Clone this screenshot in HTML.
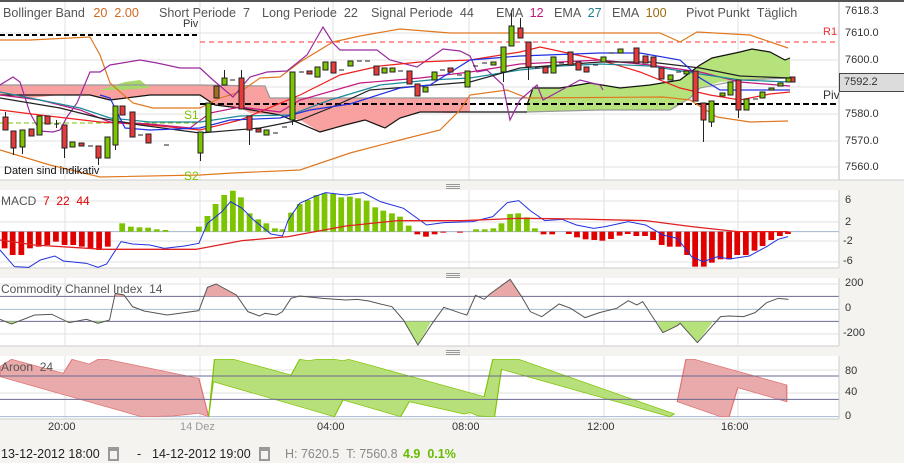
<!DOCTYPE html>
<html><head><meta charset="utf-8"><style>
html,body{margin:0;padding:0;background:#f4f3f0;width:904px;height:463px;overflow:hidden;font-family:"Liberation Sans",sans-serif}
.t{position:absolute;white-space:nowrap;font-size:12.6px;color:#555;line-height:1}
.a{position:absolute;font-size:11px;color:#333;line-height:1;white-space:nowrap}
</style></head><body>
<svg width="904" height="463" style="position:absolute;left:0;top:0" xmlns="http://www.w3.org/2000/svg">
<rect x="0" y="2" width="839" height="178" fill="#fff"/>
<rect x="839" y="2" width="65" height="178" fill="#fff"/>
<rect x="0" y="0" width="904" height="2" fill="#555"/>
<line x1="839" y1="2" x2="839" y2="180" stroke="#bbb"/>
<line x1="0" y1="180" x2="904" y2="180" stroke="#ccc"/>
<rect x="0" y="190" width="839" height="78" fill="#fff"/>
<rect x="0" y="278" width="839" height="68" fill="#fff"/>
<rect x="0" y="356" width="839" height="63" fill="#fff"/>
<g stroke="#ccc"><line x1="839" y1="190" x2="839" y2="268"/><line x1="839" y1="278" x2="839" y2="346"/><line x1="839" y1="356" x2="839" y2="419"/>
<line x1="0" y1="268" x2="839" y2="268"/><line x1="0" y1="346" x2="839" y2="346"/><line x1="0" y1="419" x2="839" y2="419"/></g>
<g stroke="#999" stroke-width="1"><line x1="446" y1="184.5" x2="460" y2="184.5"/><line x1="446" y1="186.5" x2="460" y2="186.5"/><line x1="446" y1="188.5" x2="460" y2="188.5"/>
<line x1="446" y1="273.5" x2="460" y2="273.5"/><line x1="446" y1="275.5" x2="460" y2="275.5"/><line x1="446" y1="277.5" x2="460" y2="277.5"/>
<line x1="446" y1="350.5" x2="460" y2="350.5"/><line x1="446" y1="352.5" x2="460" y2="352.5"/><line x1="446" y1="354.5" x2="460" y2="354.5"/></g>
<g stroke="#e2e2e2">
<line x1="65" y1="2" x2="65" y2="180"/><line x1="200" y1="2" x2="200" y2="180"/><line x1="333" y1="2" x2="333" y2="180"/><line x1="469" y1="2" x2="469" y2="180"/><line x1="604" y1="2" x2="604" y2="180"/><line x1="738" y1="2" x2="738" y2="180"/>
<line x1="0" y1="33" x2="839" y2="33"/><line x1="0" y1="60" x2="839" y2="60"/><line x1="0" y1="87" x2="839" y2="87"/><line x1="0" y1="114" x2="839" y2="114"/><line x1="0" y1="141" x2="839" y2="141"/><line x1="0" y1="167" x2="839" y2="167"/>
<line x1="65" y1="190" x2="65" y2="268"/><line x1="200" y1="190" x2="200" y2="268"/><line x1="333" y1="190" x2="333" y2="268"/><line x1="469" y1="190" x2="469" y2="268"/><line x1="604" y1="190" x2="604" y2="268"/><line x1="738" y1="190" x2="738" y2="268"/>
<line x1="0" y1="201" x2="839" y2="201"/><line x1="0" y1="222" x2="839" y2="222"/><line x1="0" y1="241" x2="839" y2="241"/><line x1="0" y1="262" x2="839" y2="262"/>
<line x1="65" y1="278" x2="65" y2="346"/><line x1="200" y1="278" x2="200" y2="346"/><line x1="333" y1="278" x2="333" y2="346"/><line x1="469" y1="278" x2="469" y2="346"/><line x1="604" y1="278" x2="604" y2="346"/><line x1="738" y1="278" x2="738" y2="346"/>
<line x1="0" y1="284" x2="839" y2="284"/><line x1="0" y1="334" x2="839" y2="334"/>
<line x1="65" y1="356" x2="65" y2="419"/><line x1="200" y1="356" x2="200" y2="419"/><line x1="333" y1="356" x2="333" y2="419"/><line x1="469" y1="356" x2="469" y2="419"/><line x1="604" y1="356" x2="604" y2="419"/><line x1="738" y1="356" x2="738" y2="419"/>
<line x1="0" y1="370" x2="839" y2="370"/><line x1="0" y1="393" x2="839" y2="393"/>
</g>

<polygon points="0,85 200,85 215,85 265,86 270,98 470,98 470,112 450,113 420,112 400,118 385,128 365,120 345,125 320,132 300,120 280,115 250,113 240,108 215,105 200,95 150,95 110,100 90,95 60,95 30,98 0,95" fill="#f9a0a0"/>
<polygon points="100,90 125,82 140,80 150,88 120,90" fill="#a6d86a"/>
<polygon points="527,105 533,88 560,88 590,83 620,88 650,85 680,80 700,65 712,58 740,52 752,49 770,52 785,60 790,58 790,78 760,80 740,80 720,82 700,88 690,98 670,110 600,110 540,112 527,112" fill="#b5e27a"/>
<g fill="none" stroke-width="1.2">
<polyline points="527,105 533,88 560,88 590,83 620,88 650,85 680,80 700,65 712,58 740,52 752,49 770,52 785,60 790,58" stroke="#111"/>
<polyline points="0,95 60,95 90,95 110,100 150,95 200,95 215,105 240,108 280,115 320,132 345,125 365,120 385,128 400,118 420,112 470,112 527,112" stroke="#111"/>
<polyline points="0,85 200,85 265,86 270,98 470,98 527,98" stroke="#999"/>
<polyline points="527,112 600,110 670,110 690,98 700,88 740,80 790,78" stroke="#999"/>
</g>
<line x1="0" y1="35" x2="200" y2="35" stroke="#000" stroke-width="2" stroke-dasharray="5,3"/>
<line x1="200" y1="42" x2="839" y2="42" stroke="#f33" stroke-width="1" stroke-dasharray="5,4"/>
<line x1="200" y1="104" x2="839" y2="104" stroke="#000" stroke-width="2" stroke-dasharray="6,3"/>
<line x1="0" y1="123" x2="200" y2="123" stroke="#7cc300" stroke-width="1" stroke-dasharray="5,3"/>
<g fill="none" stroke-width="1.2">
<polyline points="0,40 30,40 70,38 90,37 100,55 110,83 133,103 153,108 200,108 220,98 240,92 260,78 280,77 300,62 333,42 360,36 400,29 450,33 507,33 600,33 660,33 680,42 697,32 750,35 788,48" stroke="#e07820"/>
<polyline points="0,150 50,165 100,177 200,175 233,173 300,170 350,153 400,140 440,130 460,110 470,95 507,90 527,98 663,97 690,100 717,117 750,122 788,121" stroke="#e07820"/>
<polyline points="0,85 13,77 20,82 30,113 40,131 53,132 60,130 67,117 77,103 90,72 100,72 110,65 140,60 157,63 180,68 200,68 213,80 233,97 250,77 267,72 287,71 307,55 323,27 333,43 340,50 377,50 390,60 417,67 443,49 460,51 470,56 477,72 487,70 503,85 510,120 520,100 537,85 543,100 567,87 580,80 600,85 603,90" stroke="#9a2aa0"/>
<polyline points="0,110 40,115 100,122 150,125 200,130 240,120 300,95 340,75 380,66 420,62 470,60 520,52 540,47 600,60 640,72 680,88 710,95 740,100 770,94 790,92" stroke="#ee2020"/>
<polyline points="0,95 40,100 80,110 110,122 150,124 190,128 210,113 240,107 280,112 300,100 360,83 420,78 470,72 520,64 600,60 650,65 700,72 740,82 790,86" stroke="#c01880"/>
<polyline points="0,92 40,100 80,108 110,118 150,122 200,122 240,116 290,115 330,100 380,85 430,80 470,78 520,70 560,66 600,64 650,66 700,74 740,80 790,82" stroke="#1a8a9a"/>
<polyline points="0,98 60,108 100,118 140,125 200,133 260,128 300,120 330,108 370,90 420,86 470,82 520,68 600,62 650,62 700,68 740,76 790,78" stroke="#222"/>
<polyline points="100,95 110,98 125,128 150,130 200,128 230,120 280,118 310,110 350,104 400,88 430,85 470,60 520,56 600,53 640,53 680,60 700,78 720,90 790,90" stroke="#2030e0"/>
</g>
<g stroke="#222" stroke-width="1">
<g fill="#e83a3a">
<rect x="3" y="117" width="5" height="13"/><rect x="11" y="131" width="5" height="17"/><rect x="29" y="129" width="5" height="7"/><rect x="45" y="116" width="5" height="8"/><rect x="62" y="125" width="5" height="23"/><rect x="79" y="143" width="5" height="3"/><rect x="96" y="146" width="5" height="12"/><rect x="120" y="106" width="5" height="9"/><rect x="130" y="112" width="5" height="25"/><rect x="146" y="134" width="5" height="9"/><rect x="239" y="78" width="5" height="31"/><rect x="247" y="116" width="5" height="14"/><rect x="256" y="129" width="5" height="3"/><rect x="307" y="71" width="5" height="3"/><rect x="331" y="62" width="5" height="11"/><rect x="374" y="66" width="5" height="9"/><rect x="407" y="71" width="5" height="13"/><rect x="415" y="84" width="5" height="12"/><rect x="448" y="68" width="5" height="4"/><rect x="518" y="28" width="5" height="10"/><rect x="526" y="42" width="5" height="25"/><rect x="543" y="67" width="5" height="6"/><rect x="568" y="52" width="5" height="13"/><rect x="576" y="62" width="5" height="8"/><rect x="584" y="67" width="5" height="5"/><rect x="634" y="48" width="5" height="15"/><rect x="643" y="56" width="5" height="7"/><rect x="651" y="57" width="5" height="10"/><rect x="659" y="68" width="5" height="11"/><rect x="693" y="71" width="5" height="30"/><rect x="701" y="103" width="5" height="17"/><rect x="736" y="80" width="5" height="30"/><rect x="790" y="77" width="5" height="5"/>
</g>
<g fill="#7cc300">
<rect x="20" y="130" width="5" height="17"/><rect x="37" y="116" width="5" height="19"/><rect x="70" y="142" width="5" height="5"/><rect x="105" y="137" width="5" height="21"/><rect x="113" y="106" width="5" height="39"/><rect x="198" y="132" width="5" height="21"/><rect x="206" y="103" width="5" height="29"/><rect x="214" y="86" width="5" height="12" fill="#a07020"/><rect x="222" y="78" width="5" height="7"/><rect x="264" y="130" width="5" height="5"/><rect x="290" y="72" width="5" height="48"/><rect x="315" y="67" width="5" height="10"/><rect x="323" y="62" width="5" height="8"/><rect x="348" y="61" width="5" height="5"/><rect x="382" y="68" width="5" height="5"/><rect x="390" y="68" width="5" height="4"/><rect x="423" y="87" width="5" height="5"/><rect x="432" y="72" width="5" height="8"/><rect x="465" y="71" width="5" height="16"/><rect x="491" y="62" width="5" height="3"/><rect x="501" y="47" width="5" height="25"/><rect x="509" y="26" width="5" height="20"/><rect x="551" y="57" width="5" height="16"/><rect x="601" y="57" width="5" height="5"/><rect x="618" y="49" width="5" height="4"/><rect x="668" y="75" width="5" height="5"/><rect x="684" y="71" width="5" height="3"/><rect x="709" y="101" width="5" height="21"/><rect x="720" y="93" width="5" height="3"/><rect x="728" y="82" width="5" height="13"/><rect x="744" y="99" width="5" height="11"/><rect x="760" y="92" width="5" height="6"/><rect x="769" y="88" width="5" height="2"/><rect x="778" y="83" width="5" height="3"/><rect x="786" y="78" width="5" height="4"/>
</g>
<path d="M5.5 112V117M13.5 148V155M22.5 147V154M64.5 148V158M98.5 158V165M115.5 145V150M200.5 153V161M224.5 70V78M241.5 70V78M249.5 130V145M292.5 120V125M503.5 72V82M511.5 10V26M520.5 18V28M528.5 67V80M703.5 120V142M738.5 110V118M711.5 122V127M54 124H59M56.5 120V128M88 146H93M138 135H143M164 145H169M230 80H235M273 133H278M282 127H287M299 72H304M339 70H344M357 61H362M365 61H370M398 71H403M440 70H445M457 75H462M473 66H478M482 63H487M535 68H540M559 63H564M593 65H598M609 53H614M676 72H681M753 99H758"/>
</g>

<g transform="translate(0,180) scale(0.5764,0.3333)">
<line x1="0" y1="155" x2="1455" y2="155" stroke="#a0b4c8" stroke-width="3"/>
<g fill="#e00000">
<rect x="3" y="155" width="10" height="50"/><rect x="17" y="155" width="10" height="70"/><rect x="32" y="155" width="10" height="70"/><rect x="47" y="155" width="10" height="50"/><rect x="62" y="155" width="10" height="45"/><rect x="77" y="155" width="10" height="40"/><rect x="92" y="155" width="10" height="30"/><rect x="107" y="155" width="10" height="40"/><rect x="122" y="155" width="10" height="40"/><rect x="137" y="155" width="10" height="45"/><rect x="152" y="155" width="10" height="50"/><rect x="167" y="155" width="10" height="55"/><rect x="182" y="155" width="10" height="45"/>
<rect x="719" y="155" width="10" height="8"/><rect x="734" y="155" width="10" height="15"/><rect x="749" y="155" width="10" height="8"/><rect x="764" y="155" width="10" height="3"/><rect x="793" y="155" width="10" height="3"/>
<rect x="938" y="155" width="10" height="8"/><rect x="953" y="155" width="10" height="8"/><rect x="982" y="155" width="10" height="7"/><rect x="996" y="155" width="10" height="17"/><rect x="1011" y="155" width="10" height="23"/><rect x="1026" y="155" width="10" height="25"/><rect x="1040" y="155" width="10" height="27"/><rect x="1055" y="155" width="10" height="22"/><rect x="1070" y="155" width="10" height="12"/><rect x="1084" y="155" width="10" height="7"/><rect x="1099" y="155" width="10" height="13"/><rect x="1114" y="155" width="10" height="13"/><rect x="1128" y="155" width="10" height="25"/><rect x="1143" y="155" width="10" height="40"/><rect x="1157" y="155" width="10" height="45"/><rect x="1172" y="155" width="10" height="45"/><rect x="1187" y="155" width="10" height="70"/><rect x="1201" y="155" width="10" height="105"/><rect x="1216" y="155" width="10" height="105"/><rect x="1230" y="155" width="10" height="93"/><rect x="1245" y="155" width="10" height="83"/><rect x="1260" y="155" width="10" height="83"/><rect x="1274" y="155" width="10" height="70"/><rect x="1289" y="155" width="10" height="70"/><rect x="1304" y="155" width="10" height="57"/><rect x="1318" y="155" width="10" height="43"/><rect x="1333" y="155" width="10" height="25"/><rect x="1348" y="155" width="10" height="13"/><rect x="1362" y="155" width="10" height="7"/>
</g>
<g fill="#7cc300">
<rect x="207" y="130" width="10" height="25"/><rect x="222" y="140" width="10" height="15"/><rect x="237" y="142" width="10" height="13"/><rect x="252" y="143" width="10" height="12"/><rect x="267" y="148" width="10" height="7"/><rect x="282" y="150" width="10" height="5"/>
<rect x="340" y="140" width="10" height="15"/><rect x="355" y="108" width="10" height="47"/><rect x="369" y="72" width="10" height="83"/><rect x="384" y="45" width="10" height="110"/><rect x="399" y="32" width="10" height="123"/><rect x="413" y="52" width="10" height="103"/><rect x="428" y="100" width="10" height="55"/><rect x="443" y="118" width="10" height="37"/><rect x="457" y="130" width="10" height="25"/><rect x="472" y="145" width="10" height="10"/><rect x="485" y="148" width="10" height="7"/>
<rect x="500" y="98" width="10" height="57"/><rect x="515" y="72" width="10" height="83"/><rect x="529" y="60" width="10" height="95"/><rect x="544" y="45" width="10" height="110"/><rect x="558" y="40" width="10" height="115"/><rect x="573" y="42" width="10" height="113"/><rect x="587" y="52" width="10" height="103"/><rect x="602" y="50" width="10" height="105"/><rect x="616" y="55" width="10" height="100"/><rect x="631" y="62" width="10" height="93"/><rect x="646" y="82" width="10" height="73"/><rect x="660" y="92" width="10" height="63"/><rect x="675" y="100" width="10" height="55"/><rect x="689" y="110" width="10" height="45"/><rect x="704" y="137" width="10" height="18"/>
<rect x="821" y="148" width="10" height="7"/><rect x="836" y="148" width="10" height="7"/><rect x="851" y="145" width="10" height="10"/><rect x="865" y="130" width="10" height="25"/><rect x="880" y="102" width="10" height="53"/><rect x="894" y="100" width="10" height="55"/><rect x="909" y="112" width="10" height="43"/><rect x="923" y="145" width="10" height="10"/>
</g>
<polyline fill="none" stroke="#2030e0" stroke-width="1" vector-effect="non-scaling-stroke" points="0,210 25,260 50,262 70,240 95,228 110,243 150,250 170,262 185,252 210,185 230,192 260,195 285,205 320,198 345,190 360,130 385,95 400,65 420,85 440,120 470,162 490,168 500,120 520,70 545,50 565,38 600,45 630,38 660,65 700,85 740,135 770,128 820,125 855,110 880,68 900,62 920,92 945,122 975,118 1000,135 1030,145 1050,140 1090,125 1120,135 1150,165 1175,175 1200,230 1220,245 1245,230 1265,237 1300,228 1330,200 1350,178 1367,170"/>
<polyline fill="none" stroke="#e02020" stroke-width="1.3" vector-effect="non-scaling-stroke" points="0,180 60,195 180,208 340,208 420,182 500,170 600,138 690,122 800,122 900,115 1000,117 1120,122 1200,140 1280,155 1367,155"/>
</g>

<g transform="translate(0,180) scale(0.5764,0.3333)">
<line x1="0" y1="388" x2="1455" y2="388" stroke="#a8bccc" stroke-width="3"/>
<line x1="0" y1="349" x2="1455" y2="349" stroke="#6a6a90" stroke-width="3"/>
<line x1="0" y1="424" x2="1455" y2="424" stroke="#6a6a90" stroke-width="3"/>
<g fill="#e8a8a8">
<polygon points="197,349 200,340 215,345 217,349"/><polygon points="355,349 360,322 375,312 410,345 412,349"/><polygon points="512,349 520,346 528,349"/><polygon points="845,349 850,342 885,298 905,349"/>
</g>
<g fill="#b5e27a">
<polygon points="5,424 20,432 35,424"/><polygon points="110,424 120,428 132,424"/><polygon points="160,424 170,430 185,424"/><polygon points="700,424 725,495 748,424"/><polygon points="1140,424 1150,458 1175,437 1180,430 1210,488 1237,424"/>
</g>
<polyline fill="none" stroke="#555" stroke-width="1" vector-effect="non-scaling-stroke" points="0,418 20,432 60,405 90,403 120,428 150,418 170,430 190,420 200,340 215,345 230,380 250,393 290,405 345,392 360,322 375,312 410,345 430,395 450,408 460,400 480,405 490,395 505,355 520,348 560,355 600,360 620,358 640,363 660,372 680,380 700,420 725,495 750,430 770,382 800,400 810,405 825,346 840,358 850,342 885,298 905,350 920,395 940,410 970,372 990,385 1015,413 1040,398 1070,385 1090,362 1105,375 1115,365 1150,458 1175,437 1180,430 1210,488 1250,410 1265,408 1290,410 1310,398 1330,368 1350,355 1368,358"/>
</g>

<g transform="translate(0,340) scale(0.5764,0.3333)">
<line x1="0" y1="230" x2="1455" y2="230" stroke="#a8bcd4" stroke-width="3"/>
<polygon fill="#e8aaaa" stroke="#e07070" stroke-width="2" points="0,80 20,58 110,100 125,58 155,72 170,58 185,58 345,115 362,230 345,220 300,228 245,230 0,110"/>
<polygon fill="#b8e07a" stroke="#7cc300" stroke-width="2" points="362,230 372,58 405,58 505,105 520,58 535,62 550,58 580,58 595,62 605,58 840,170 855,58 900,58 1170,222 1162,230 870,88 858,230 830,228 815,218 805,222 710,185 695,230 595,180 580,230 370,125"/>
<polygon fill="#e8aaaa" stroke="#e07070" stroke-width="2" points="1175,185 1190,58 1205,58 1365,135 1365,185 1280,143 1265,230 1250,230"/>
<line x1="0" y1="108" x2="1455" y2="108" stroke="#6a6a90" stroke-width="3"/>
<line x1="0" y1="178" x2="1455" y2="178" stroke="#6a6a90" stroke-width="3"/>
</g>
<rect x="839.5" y="73.5" width="66" height="18" fill="#dcdcdc" stroke="#444"/>
<rect x="108" y="447" width="11" height="14" fill="#999"/><rect x="110" y="451" width="7" height="8" fill="#f4f3f0"/>
<rect x="259" y="447" width="11" height="14" fill="#999"/><rect x="261" y="451" width="7" height="8" fill="#f4f3f0"/>
</svg>

<div class="t" style="left:3px;top:7px">Bollinger Band <span style="color:#d2691e;margin-left:5px">20 &nbsp;2.00</span></div>
<div class="t" style="left:159px;top:7px">Short Periode &nbsp;7</div>
<div class="t" style="left:262px;top:7px">Long Periode &nbsp;22</div>
<div class="t" style="left:371px;top:7px">Signal Periode &nbsp;44</div>
<div class="t" style="left:496px;top:7px">EMA <span style="color:#c0187a">&nbsp;12</span></div>
<div class="t" style="left:554px;top:7px">EMA <span style="color:#1f7f8f">&nbsp;27</span></div>
<div class="t" style="left:612px;top:7px">EMA <span style="color:#9a6a10">&nbsp;100</span></div>
<div class="t" style="left:686px;top:7px">Pivot Punkt &nbsp;Täglich</div>
<div class="a" style="left:183px;top:19px">Piv</div>
<div class="a" style="left:823px;top:27px;color:#e33">R1</div>
<div class="a" style="left:823px;top:89px;font-size:12px">Piv</div>
<div class="a" style="left:184px;top:109px;color:#7cc300;font-size:12px">S1</div>
<div class="a" style="left:184px;top:170px;color:#7cc300;font-size:12px">S2</div>
<div class="a" style="left:4px;top:166px;color:#111">Daten sind indikativ</div>
<div class="a" style="left:845px;top:6px">7618.3</div>
<div class="a" style="left:845px;top:28px">7610.0</div>
<div class="a" style="left:845px;top:55px">7600.0</div>
<div class="a" style="left:844px;top:77px">7592.2</div>
<div class="a" style="left:845px;top:109px">7580.0</div>
<div class="a" style="left:845px;top:136px">7570.0</div>
<div class="a" style="left:845px;top:162px">7560.0</div>
<div class="t" style="left:1px;top:195px;font-size:12px">MACD <span style="color:#e00000">&nbsp;7 &nbsp;22 &nbsp;44</span></div>
<div class="a" style="left:845px;top:195px">6</div><div class="a" style="left:845px;top:217px">2</div><div class="a" style="left:843px;top:236px">-2</div><div class="a" style="left:843px;top:256px">-6</div>
<div class="t" style="left:1px;top:283px;font-size:12px">Commodity Channel Index &nbsp;14</div>
<div class="a" style="left:845px;top:278px">200</div><div class="a" style="left:845px;top:303px">0</div><div class="a" style="left:843px;top:328px">-200</div>
<div class="t" style="left:1px;top:361px;font-size:12px">Aroon &nbsp;24</div>
<div class="a" style="left:845px;top:366px">80</div><div class="a" style="left:845px;top:387px">40</div><div class="a" style="left:845px;top:411px">0</div>
<div class="a" style="left:48px;top:422px">20:00</div>
<div class="a" style="left:180px;top:422px;color:#999">14 Dez</div>
<div class="a" style="left:317px;top:422px">04:00</div>
<div class="a" style="left:452px;top:422px">08:00</div>
<div class="a" style="left:587px;top:422px">12:00</div>
<div class="a" style="left:721px;top:422px">16:00</div>
<div class="t" style="left:1px;top:448px;color:#222;font-size:12.5px">13-12-2012 18:00</div>
<div class="t" style="left:137px;top:448px;color:#222;font-size:12.5px">-</div>
<div class="t" style="left:152px;top:448px;color:#222;font-size:12.5px">14-12-2012 19:00</div>
<div class="t" style="left:285px;top:448px;color:#888;font-size:12.5px">H: 7620.5 &nbsp;T: 7560.8</div>
<div class="t" style="left:403px;top:448px;color:#66bb00;font-size:12.5px;font-weight:bold">4.9 &nbsp;0.1%</div>
</body></html>
